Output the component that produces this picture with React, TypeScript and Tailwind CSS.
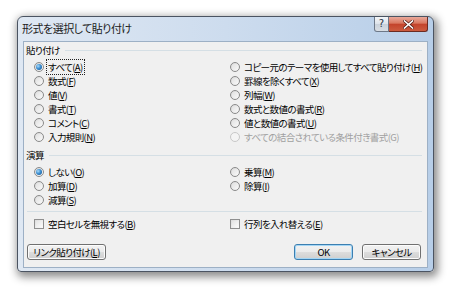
import React from "react";

const FONT = "font-['Noto_Sans_CJK_JP','Noto_Sans',sans-serif] [font-feature-settings:'palt']";

function Radio({ checked, disabled }: { checked?: boolean; disabled?: boolean }) {
  return (
    <span
      className={`relative inline-flex shrink-0 items-center justify-center w-[10px] h-[10px] rounded-full border ${
        disabled ? "border-[#c8c8c8] bg-[#f4f4f4]" : "border-[#8a8a8a] bg-gradient-to-br from-[#d8d8d8] to-[#fbfbfb]"
      }`}
    >
      {checked ? (
        <span className="w-[6px] h-[6px] rounded-full bg-[radial-gradient(circle_at_35%_35%,#a9dbfa_0%,#3d8fd1_45%,#0d4a86_100%)]" />
      ) : (
        <span className={`w-[6px] h-[6px] rounded-full ${disabled ? "bg-[#f4f4f4]" : "bg-gradient-to-br from-[#e2e2e2] to-[#f7f7f7]"}`} />
      )}
    </span>
  );
}

function Check() {
  return (
    <span className="inline-block shrink-0 w-[10px] h-[10px] border border-[#8f8f8f] bg-gradient-to-br from-[#dcdcdc] to-[#fbfbfb] p-[1px]">
      <span className="block w-full h-full bg-gradient-to-br from-[#e4e4e4] to-[#fafafa]" />
    </span>
  );
}

type Item = { t: string; k?: string; checked?: boolean; disabled?: boolean; focus?: boolean };

function Label({ it }: { it: Item }) {
  const body = it.k ? (
    <>
      {it.t}(<span className="underline underline-offset-[1px]">{it.k}</span>)
    </>
  ) : (
    it.t
  );
  return (
    <span
      className={`whitespace-nowrap ${it.disabled ? "text-[#a0a0a0]" : "text-[#000000]"} ${
        it.focus ? "outline outline-1 outline-dotted outline-[#222] outline-offset-[0px] px-[1px] -ml-[1px]" : ""
      }`}
    >
      {body}
    </span>
  );
}

function RadioRow({ it }: { it: Item }) {
  return (
    <div className="flex items-center h-[14px] gap-[4px]">
      <Radio checked={it.checked} disabled={it.disabled} />
      <Label it={it} />
    </div>
  );
}

function Header({ title }: { title: string }) {
  return (
    <div className="flex items-center h-[14px] pl-[2px] pr-[5px] gap-[5px]">
      <span className="text-[#000000] whitespace-nowrap">{title}</span>
      <span className="flex-1 h-px bg-[#d5dfe5]" />
    </div>
  );
}

function Btn({ children, def, className }: { children: React.ReactNode; def?: boolean; className?: string }) {
  return (
    <div
      className={`flex items-center justify-center h-[16px] rounded-[3px] border ${
        def ? "border-[#3c7fb1] shadow-[inset_0_0_0_1px_#a4d6f5]" : "border-[#707070] shadow-[inset_0_0_0_1px_#fcfcfc]"
      } bg-[linear-gradient(#f2f2f2_0%,#ebebeb_50%,#dddddd_51%,#cfcfcf_100%)] text-[#000000] whitespace-nowrap ${className ?? ""}`}
    >
      {children}
    </div>
  );
}

export default function App() {
  const pasteLeft: Item[] = [
    { t: "すべて", k: "A", checked: true, focus: true },
    { t: "数式", k: "F" },
    { t: "値", k: "V" },
    { t: "書式", k: "T" },
    { t: "コメント", k: "C" },
    { t: "入力規則", k: "N" },
  ];
  const pasteRight: Item[] = [
    { t: "コピー元のテーマを使用してすべて貼り付け", k: "H" },
    { t: "罫線を除くすべて", k: "X" },
    { t: "列幅", k: "W" },
    { t: "数式と数値の書式", k: "R" },
    { t: "値と数値の書式", k: "U" },
    { t: "すべての結合されている条件付き書式(G)", disabled: true },
  ];
  const opLeft: Item[] = [
    { t: "しない", k: "O", checked: true },
    { t: "加算", k: "D" },
    { t: "減算", k: "S" },
  ];
  const opRight: Item[] = [
    { t: "乗算", k: "M" },
    { t: "除算", k: "I" },
  ];

  return (
    <div className={`w-[450px] h-[289px] bg-white overflow-hidden pt-[16px] pl-[17px] text-[9.5px] leading-[14px] tracking-[-0.6px] ${FONT}`}>
      <div className="w-[417px] h-[256px] flex flex-col rounded-t-[6px] rounded-b-[4px] border border-[#4b5462] bg-[linear-gradient(90deg,#dfe8f3_0%,#cddcee_50%,#b7cee8_100%)] shadow-[2px_3px_9px_2px_rgba(0,0,0,0.45)]">
        {/* Title bar */}
        <div className="flex h-[24px] pl-[4px] pr-[5px]">
          <div className="flex-1 pt-[4px] text-[11px] leading-[15px] tracking-[-0.5px] text-[#1c1c1c]">形式を選択して貼り付け</div>
          <div className="flex h-[15px]">
            <div className="w-[15px] h-[15px] rounded-bl-[3px] border border-t-0 border-[#6d7888] bg-[linear-gradient(#f4f6f8_0%,#dde3ea_50%,#c9d1da_51%,#d9dee4_100%)] flex items-center justify-center text-[10px] leading-[10px] tracking-normal font-['DejaVu_Sans',sans-serif] text-[#2a3340]">
              ?
            </div>
            <div className="w-[39px] h-[15px] rounded-br-[3px] border border-t-0 border-l-0 border-[#6b2b22] bg-[linear-gradient(#e9a99b_0%,#d9775f_45%,#c3432b_50%,#cc5b3f_100%)] flex items-center justify-center">
              <svg width="11" height="9" viewBox="0 0 11 9">
                <path d="M1.5 1 L9.5 8 M9.5 1 L1.5 8" stroke="#5a2018" strokeWidth="3" strokeLinecap="square" />
                <path d="M1.5 1 L9.5 8 M9.5 1 L1.5 8" stroke="#ffffff" strokeWidth="1.6" strokeLinecap="square" />
              </svg>
            </div>
          </div>
        </div>
        {/* Client */}
        <div className="ml-[5px] mr-[5px] mb-[3px] flex-1 border border-[#9db0c5] bg-[#f0f0f0] flex flex-col pt-[1px]">
          <Header title="貼り付け" />
          <div className="grid grid-cols-[196px_1fr] mt-[3px] pl-[10px]">
            <div className="flex flex-col">
              {pasteLeft.map((it) => (
                <RadioRow key={it.t} it={it} />
              ))}
            </div>
            <div className="flex flex-col">
              {pasteRight.map((it) => (
                <RadioRow key={it.t} it={it} />
              ))}
            </div>
          </div>
          <div className="mt-[4px]">
            <Header title="演算" />
          </div>
          <div className="grid grid-cols-[196px_1fr] mt-[3px] pl-[10px]">
            <div className="flex flex-col">
              {opLeft.map((it) => (
                <RadioRow key={it.t} it={it} />
              ))}
            </div>
            <div className="flex flex-col">
              {opRight.map((it) => (
                <RadioRow key={it.t} it={it} />
              ))}
            </div>
          </div>
          <div className="mt-[4px] ml-[3px] mr-[5px] h-px bg-[#d5dfe5]" />
          <div className="grid grid-cols-[196px_1fr] mt-[5px] pl-[10px]">
            <div className="flex items-center h-[14px] gap-[4px]">
              <Check />
              <Label it={{ t: "空白セルを無視する", k: "B" }} />
            </div>
            <div className="flex items-center h-[14px] gap-[4px]">
              <Check />
              <Label it={{ t: "行列を入れ替える", k: "E" }} />
            </div>
          </div>
          <div className="flex items-center mt-[13px] pl-[3px] pr-[6px]">
            <Btn className="w-[79px]">
              リンク貼り付け(<span className="underline">L</span>)
            </Btn>
            <div className="flex-1" />
            <Btn def className="w-[59px]">OK</Btn>
            <Btn className="w-[59px] ml-[9px]">キャンセル</Btn>
          </div>
        </div>
      </div>
    </div>
  );
}
